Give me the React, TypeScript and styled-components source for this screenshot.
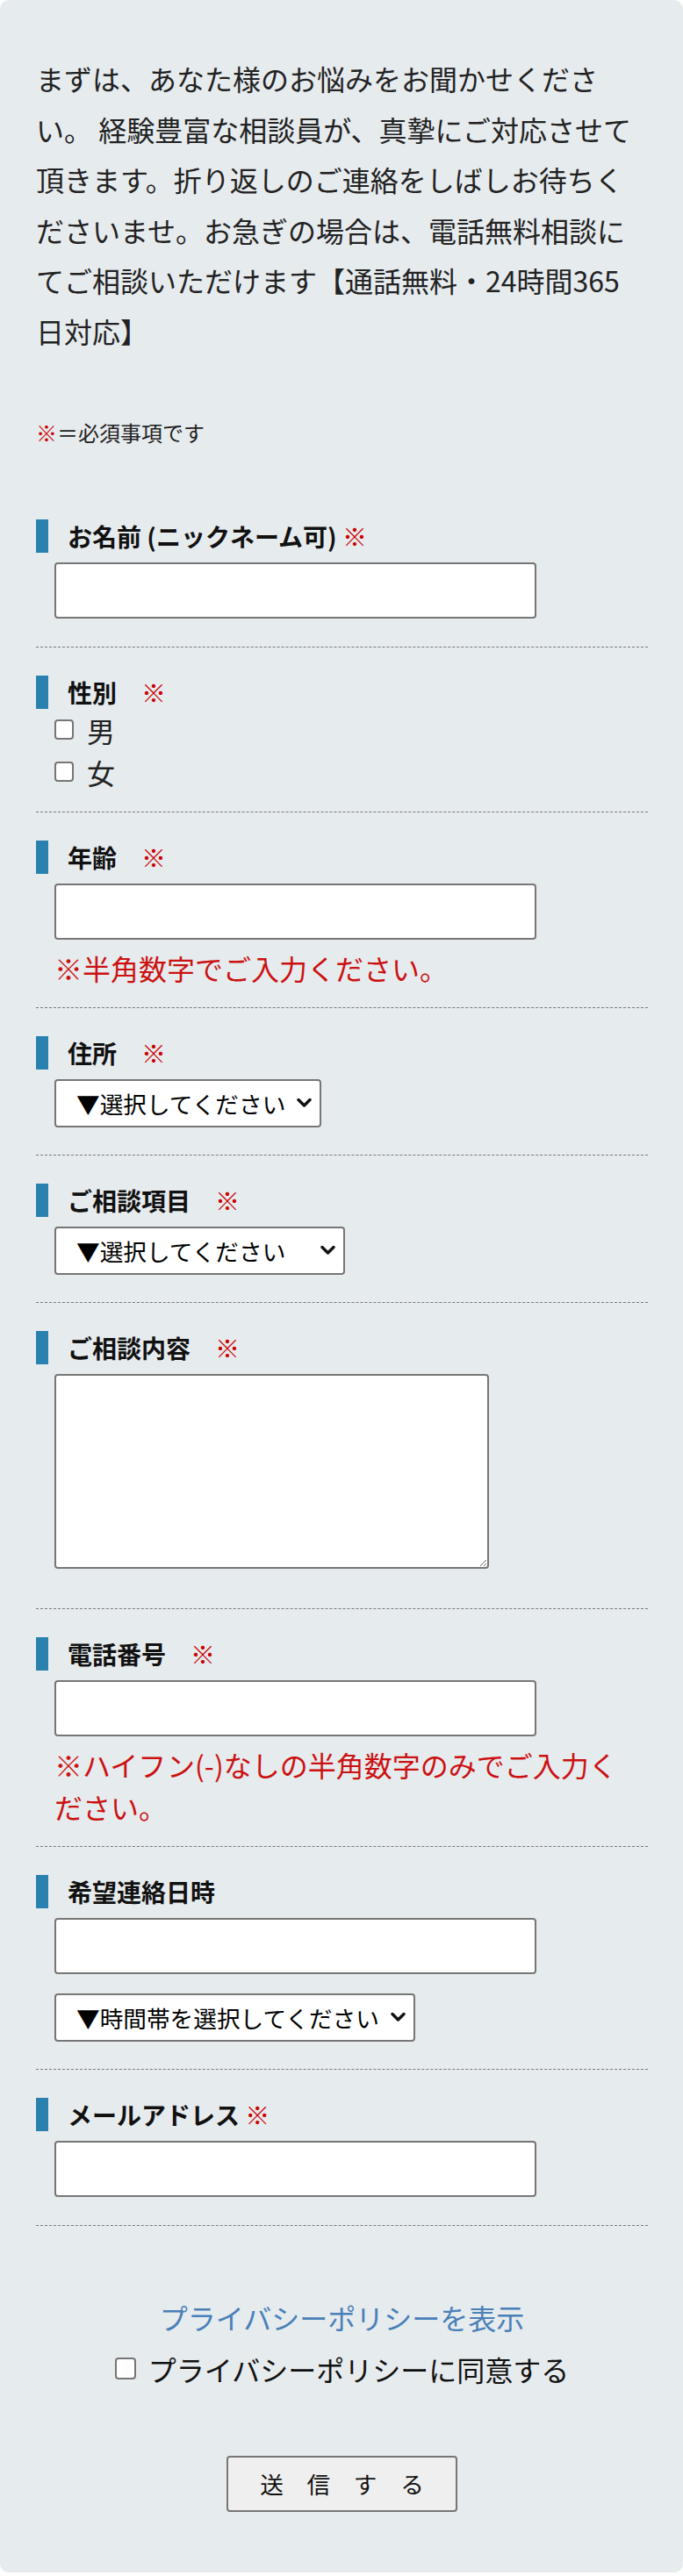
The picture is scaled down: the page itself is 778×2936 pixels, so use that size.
import React from 'react';
import styled, { createGlobalStyle } from 'styled-components';

const GlobalStyle = createGlobalStyle`
  * {
    box-sizing: border-box;
  }
  body {
    margin: 0;
    background: #ffffff;
    color: #222222;
    font-family: "Noto Sans CJK JP", "Noto Sans", sans-serif;
  }
`;

const ChevronIcon = () => (
  <Chevron viewBox="0 0 17 11" aria-hidden="true">
    <polyline
      points="2,2 8.5,8.5 15,2"
      fill="none"
      stroke="#111"
      strokeWidth="3.4"
      strokeLinecap="round"
      strokeLinejoin="round"
    />
  </Chevron>
);

type SelectProps = { width: number; placeholder: string };

const SelectBox = ({ width, placeholder }: SelectProps) => (
  <SelectWrap $width={width}>
    <Select defaultValue="">
      <option value="">{placeholder}</option>
    </Select>
    <ChevronIcon />
  </SelectWrap>
);

const App = () => {
  return (
    <>
      <GlobalStyle />
      <Panel>
        <Intro>
          まずは、あなた様のお悩みをお聞かせください。 経験豊富な相談員が、真摯にご対応させて頂きます。折り返しのご連絡をしばしお待ちくださいませ。お急ぎの場合は、電話無料相談にてご相談いただけます【通話無料・24時間365日対応】
        </Intro>
        <RequiredNote>
          <Req>※</Req>＝必須事項です
        </RequiredNote>

        <Form onSubmit={(e) => e.preventDefault()}>
          <Field>
            <Label>
              お名前 (ニックネーム可) <Req>※</Req>
            </Label>
            <TextInput type="text" />
          </Field>

          <Field>
            <Label>
              性別　<Req>※</Req>
            </Label>
            <CheckGroup>
              <CheckRow>
                <Checkbox type="checkbox" $size={22} />男
              </CheckRow>
              <CheckRow>
                <Checkbox type="checkbox" $size={22} />女
              </CheckRow>
            </CheckGroup>
          </Field>

          <Field>
            <Label>
              年齢　<Req>※</Req>
            </Label>
            <TextInput type="text" />
            <Note>※半角数字でご入力ください。</Note>
          </Field>

          <Field>
            <Label>
              住所　<Req>※</Req>
            </Label>
            <SelectBox width={304} placeholder="▼選択してください" />
          </Field>

          <Field>
            <Label>
              ご相談項目　<Req>※</Req>
            </Label>
            <SelectBox width={331} placeholder="▼選択してください" />
          </Field>

          <Field>
            <Label>
              ご相談内容　<Req>※</Req>
            </Label>
            <TextArea />
          </Field>

          <Field>
            <Label>
              電話番号　<Req>※</Req>
            </Label>
            <TextInput type="tel" />
            <Note>※ハイフン(-)なしの半角数字のみでご入力ください。</Note>
          </Field>

          <Field>
            <Label>希望連絡日時</Label>
            <TextInput type="text" />
            <SelectBox width={411} placeholder="▼時間帯を選択してください" />
          </Field>

          <Field>
            <Label>
              メールアドレス <Req>※</Req>
            </Label>
            <TextInput type="email" />
          </Field>

          <Consent>
            <PolicyLink href="#">プライバシーポリシーを表示</PolicyLink>
            <AgreeRow>
              <Checkbox type="checkbox" $size={24} />
              プライバシーポリシーに同意する
            </AgreeRow>
            <SubmitButton type="submit">送　信　す　る</SubmitButton>
          </Consent>
        </Form>
      </Panel>
    </>
  );
};

const Panel = styled.div`
  background: #e6ebee;
  border-radius: 10px;
  padding: 61px 40px 69px 41px;
`;

const Intro = styled.p`
  margin: 0 9px 0 0;
  font-size: 32px;
  line-height: 57.6px;
  color: #222;
`;

const RequiredNote = styled.p`
  margin: 68px 0 0;
  font-size: 24px;
  line-height: 36px;
  color: #222;
`;

const Req = styled.span`
  color: #cc0000;
  font-weight: 400;
`;

const Form = styled.form`
  margin-top: 49px;
`;

const Field = styled.div`
  display: flex;
  flex-direction: column;
  align-items: flex-start;
  padding: 32px 0 21px;
  border-bottom: 1px dashed #7a7a7a;
`;

const Label = styled.div`
  display: flex;
  align-items: center;
  height: 38px;
  border-left: 14px solid #2a81b0;
  padding-left: 22px;
  font-size: 28px;
  font-weight: 700;
  color: #111;
  white-space: pre;
`;

const TextInput = styled.input`
  display: block;
  width: 549px;
  height: 64px;
  margin: 11px 0 0 21px;
  padding: 0 10px;
  border: 2px solid #767676;
  border-radius: 4px;
  background: #fff;
  font-family: inherit;
  font-size: 26.67px;

  &:last-child {
    margin-bottom: 11px;
  }
`;

const Note = styled.p`
  max-width: 655px;
  margin: 8px 0 0 21px;
  font-size: 32px;
  line-height: 48px;
  color: #cc1111;
`;

const CheckGroup = styled.div`
  display: flex;
  flex-direction: column;
  margin-left: 21px;
`;

const CheckRow = styled.label`
  display: flex;
  align-items: center;
  gap: 15px;
  height: 48px;
  font-size: 32px;
  color: #222;
`;

const Checkbox = styled.input<{ $size: number }>`
  appearance: none;
  flex: none;
  width: ${({ $size }) => $size}px;
  height: ${({ $size }) => $size + 1}px;
  margin: 0;
  border: 2px solid #767676;
  border-radius: 4px;
  background: #fff;
`;

const SelectWrap = styled.div<{ $width: number }>`
  position: relative;
  width: ${({ $width }) => $width}px;
  margin: 11px 0 10px 21px;

  input + & {
    margin-top: 22px;
  }
`;

const Select = styled.select`
  appearance: none;
  display: block;
  width: 100%;
  height: 55px;
  padding: 0 40px 0 23px;
  border: 2px solid #767676;
  border-radius: 4px;
  background: #fff;
  color: #000;
  font-family: inherit;
  font-size: 26.67px;
`;

const Chevron = styled.svg`
  position: absolute;
  right: 11px;
  top: 50%;
  width: 17px;
  height: 11px;
  transform: translateY(-50%);
  pointer-events: none;
`;

const TextArea = styled.textarea`
  display: block;
  width: 495px;
  height: 222px;
  margin: 11px 0 24px 21px;
  border: 2px solid #767676;
  border-radius: 4px;
  background: #fff;
  font-family: inherit;
  font-size: 26.67px;
`;

const Consent = styled.div`
  display: flex;
  flex-direction: column;
  align-items: center;
  margin-top: 80px;
`;

const PolicyLink = styled.a`
  font-size: 32px;
  line-height: 48px;
  color: #4a80b8;
  text-decoration: none;
`;

const AgreeRow = styled.label`
  display: flex;
  align-items: center;
  gap: 14px;
  height: 48px;
  margin-top: 11px;
  font-size: 32px;
  color: #111;
`;

const SubmitButton = styled.button`
  width: 263px;
  height: 64px;
  margin-top: 75px;
  padding: 0;
  border: 2px solid #767676;
  border-radius: 4px;
  background: #efefef;
  color: #111;
  font-family: inherit;
  font-size: 26.67px;
`;

export default App;
